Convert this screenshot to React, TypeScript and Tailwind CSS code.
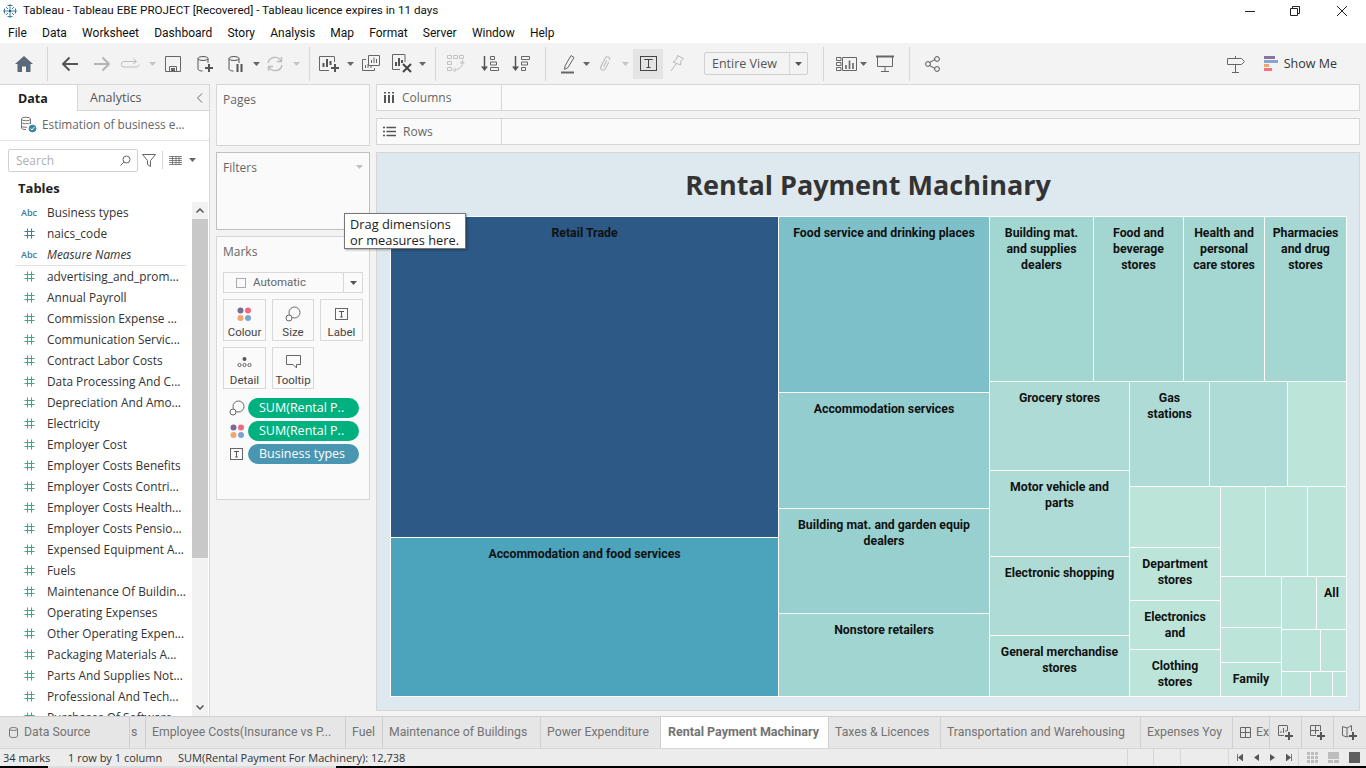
import React from 'react';

const ui = { fontFamily: '"Open Sans", "Noto Sans", sans-serif' };

const fields = [
  'advertising_and_prom...', 'Annual Payroll', 'Commission Expense ...', 'Communication Servic...',
  'Contract Labor Costs', 'Data Processing And C...', 'Depreciation And Amo...', 'Electricity', 'Employer Cost',
  'Employer Costs Benefits', 'Employer Costs Contri...', 'Employer Costs Health...', 'Employer Costs Pensio...',
  'Expensed Equipment A...', 'Fuels', 'Maintenance Of Buildin...', 'Operating Expenses', 'Other Operating Expen...',
  'Packaging Materials A...', 'Parts And Supplies Not...', 'Professional And Tech...', 'Purchases Of Software',
];

function Svg({ w = 20, h = 20, children, className = '' }: { w?: number; h?: number; children: React.ReactNode; className?: string }) {
  return (
    <svg width={w} height={h} viewBox={`0 0 ${w} ${h}`} fill="none" className={`block shrink-0 ${className}`}>
      {children}
    </svg>
  );
}

function Hash({ color }: { color: string }) {
  return (
    <Svg w={11} h={11}>
      <path d="M3.5 0.5V10.5M7.5 0.5V10.5M0.5 3.5H10.5M0.5 7.5H10.5" stroke={color} />
    </Svg>
  );
}

function Caret({ color = '#666' }: { color?: string }) {
  return (
    <Svg w={7} h={4}>
      <path d="M0 0H7L3.5 4Z" fill={color} />
    </Svg>
  );
}

function Box({ className, children }: { className: string; children?: React.ReactNode }) {
  return <div className={`h-[41px] shrink-0 flex items-center justify-center ${className}`}>{children}</div>;
}

function Sep() {
  return <div className="w-px h-[34px] bg-[#d6d6d6] shrink-0" />;
}

function Logo() {
  return (
    <Svg w={16} h={16}>
      <path d="M8 1V15M1 8H15M5.5 2.5H10.5M5.5 13.5H10.5M2.5 5.5V10.5M13.5 5.5V10.5M4 4L6 6M12 4L10 6M4 12L6 10M12 12L10 10" stroke="#3d7ea6" />
      <path d="M7 7H9V9H7Z" fill="#1f5f8b" />
    </Svg>
  );
}

function DataDrum({ color = '#555', x = 2 }: { color?: string; x?: number }) {
  return (
    <>
      <ellipse cx={x + 5} cy={3.5} rx={5} ry={2} stroke={color} />
      <path d={`M${x} 3.5V14c0 1.2 2 2 4.5 2M${x + 10} 3.5V8`} stroke={color} />
    </>
  );
}

function SizeIcon() {
  return (
    <Svg w={16} h={16}>
      <circle cx="9.5" cy="6.5" r="5.5" stroke="#666" />
      <circle cx="4" cy="12" r="3" fill="#fafafa" stroke="#666" />
    </Svg>
  );
}

function ColorIcon() {
  return (
    <Svg w={15} h={15}>
      <circle cx="3.5" cy="3.5" r="3" fill="#7b6a94" />
      <circle cx="11" cy="3.5" r="3" fill="#f06a7a" />
      <circle cx="3.5" cy="11" r="3" fill="#f2a56b" />
      <circle cx="11" cy="11" r="3" fill="#7ea3cf" />
    </Svg>
  );
}

function LabelIcon() {
  return (
    <Svg w={14} h={14}>
      <rect x="0.5" y="1.5" width="12" height="11" stroke="#666" />
      <path d="M4 4.5H9M6.5 4.5V10M5.2 10H7.8" stroke="#555" />
    </Svg>
  );
}

function MarkBtn({ label, className, children }: { label: string; className: string; children: React.ReactNode }) {
  return (
    <div className={`h-[42px] border border-[#d8d8d8] flex flex-col items-center shrink-0 ${className}`}>
      <div className="h-[25px] flex items-center justify-center pt-[3px]">{children}</div>
      <span className="font-[Roboto] text-[11.5px] leading-[15px] text-[#444]">{label}</span>
    </div>
  );
}

function Pill({ icon, text, color }: { icon: React.ReactNode; text: string; color: string }) {
  return (
    <div className="flex items-center h-[20px]">
      <div className="w-[25px] flex justify-center pl-[3px]">{icon}</div>
      <div className={`w-[111px] h-[20px] rounded-full pl-[11px] text-white text-[12.5px] leading-[20px] ${color}`}>{text}</div>
    </div>
  );
}

function Shelf({ icon, label }: { icon: React.ReactNode; label: string }) {
  return (
    <div className="h-[27px] border border-[#d6d6d6] bg-[#fafafa] flex">
      <div className="w-[125px] border-r border-[#d6d6d6] flex items-center pl-[6px] gap-[7px] text-[12px] text-[#666]">
        {icon}
        <span>{label}</span>
      </div>
    </div>
  );
}

function Cell({ className, label }: { className: string; label?: React.ReactNode }) {
  return (
    <div className={`shrink-0 overflow-hidden text-center font-[Roboto] font-bold text-[12.3px] leading-[16px] text-[#111] pt-[8px] ${className}`}>
      {label}
    </div>
  );
}

function Tab({ className, children }: { className: string; children: React.ReactNode }) {
  return (
    <div className={`h-full shrink-0 border-r border-[#cfcfcf] flex items-center font-[Roboto] text-[12.25px] text-[#737373] whitespace-nowrap overflow-hidden ${className}`}>
      {children}
    </div>
  );
}

function AddSheet({ children }: { children: React.ReactNode }) {
  return <div className="w-[32px] h-full shrink-0 border-l border-[#cfcfcf] flex items-center justify-center">{children}</div>;
}

function Plus({ x, y }: { x: number; y: number }) {
  return <path d={`M${x} ${y - 4}V${y + 4}M${x - 4} ${y}H${x + 4}`} stroke="#555" strokeWidth="2" />;
}

export default function App() {
  return (
    <div style={ui} className="relative w-[1366px] h-[768px] overflow-hidden bg-white flex flex-col text-[#333]">
      {/* window title */}
      <div className="h-[22px] flex items-center shrink-0">
        <div className="w-[23px] pl-[2px]"><Logo /></div>
        <span className="font-[Roboto] text-[11.66px] text-[#111]">Tableau - Tableau EBE PROJECT [Recovered] - Tableau licence expires in 11 days</span>
        <div className="ml-auto flex items-center">
          <div className="w-[10px] h-px bg-[#222] mr-[35px]" />
          <Svg w={10} h={10} className="mr-[36px]">
            <path d="M2.5 2.5V0.5H9.5V7.5H7.5M0.5 2.5H7.5V9.5H0.5Z" stroke="#222" />
          </Svg>
          <Svg w={12} h={12} className="mr-[18px]">
            <path d="M1 1L11 11M11 1L1 11" stroke="#222" />
          </Svg>
        </div>
      </div>

      {/* menu */}
      <div className="h-[21px] flex items-center shrink-0 pl-[8px] pt-px gap-[15.2px] font-[Roboto] text-[12px] text-[#111]">
        {['File', 'Data', 'Worksheet', 'Dashboard', 'Story', 'Analysis', 'Map', 'Format', 'Server', 'Window', 'Help'].map(m => (
          <span key={m}>{m}</span>
        ))}
      </div>

      {/* toolbar */}
      <div className="h-[41px] flex items-center shrink-0 bg-[#f3f3f3]">
        <Box className="w-[47px]">
          <Svg w={18} h={16}><path d="M9 0L18 8H15.5V16H11V10.5H7V16H2.5V8H0Z" fill="#5a6a7a" /></Svg>
        </Box>
        <Sep />
        <Box className="w-[44px]">
          <Svg w={18} h={16}><path d="M17 8H2M8.5 1.5L2 8L8.5 14.5" stroke="#555" strokeWidth="2" /></Svg>
        </Box>
        <Box className="w-[20px]">
          <Svg w={18} h={16}><path d="M1 8H16M9.5 1.5L16 8L9.5 14.5" stroke="#b5b5b5" strokeWidth="2" /></Svg>
        </Box>
        <Box className="w-[37px]">
          <Svg w={20} h={12}><path d="M15 3.5H3A2.5 2.5 0 0 0 3 9H15A2.5 2.5 0 0 0 18 6.5M12 0.5L15.5 3.5L12 6" stroke="#bdbdbd" /></Svg>
        </Box>
        <Box className="w-[6px]"><Caret color="#c4c4c4" /></Box>
        <Box className="w-[36px]">
          <Svg w={16} h={16}><path d="M0.5 0.5H15.5V15.5H0.5ZM4.5 15.5V10.5H11.5V15.5" stroke="#666" /><path d="M6 12H10V15H6Z" fill="#666" /></Svg>
        </Box>
        <Box className="w-[28px]">
          <Svg w={18} h={18}><DataDrum /><Plus x={13} y={13} /></Svg>
        </Box>
        <Box className="w-[34px]">
          <Svg w={18} h={18}><DataDrum /><path d="M10.5 9V17M14.5 9V17" stroke="#555" strokeWidth="2" /></Svg>
        </Box>
        <Box className="w-[6px]"><Caret /></Box>
        <Box className="w-[32px]">
          <Svg w={18} h={18}><path d="M2 8A7 7 0 0 1 15 6M16 10A7 7 0 0 1 3 12M15.5 2V6.5H11M2.5 16V11.5H7" stroke="#bcbcbc" strokeWidth="1.4" /></Svg>
        </Box>
        <Box className="w-[10px]"><Caret color="#c4c4c4" /></Box>
        <div className="w-[8px] shrink-0" />
        <Sep />
        <div className="w-[3px] shrink-0" />
        <Box className="w-[34px]">
          <Svg w={22} h={20}>
            <path d="M15 2.5H0.5V16.5H10" stroke="#666" />
            <path d="M4.5 9V13M8 5V13M11.5 7V11" stroke="#555" strokeWidth="2" />
            <path d="M15.5 2.5V8" stroke="#666" />
            <Plus x={16} y={14} />
          </Svg>
        </Box>
        <Box className="w-[6px]"><Caret /></Box>
        <Box className="w-[36px]">
          <Svg w={18} h={17}>
            <path d="M6.5 0.5H17.5V10.5H6.5ZM4 4.5H0.5V15.5H12.5V13" stroke="#666" />
            <path d="M9.5 8V5M12 8V2.5M14.5 8V4M3.5 13V10M6 13V9M9 13V11" stroke="#666" />
          </Svg>
        </Box>
        <Box className="w-[26px]">
          <Svg w={20} h={19}>
            <path d="M13 0.5H0.5V15.5H8M13 0.5V8" stroke="#666" />
            <path d="M4 8V12M7 4V12M10 6V9" stroke="#555" strokeWidth="2" />
            <path d="M11 10L19 18M19 10L11 18" stroke="#444" strokeWidth="2" />
          </Svg>
        </Box>
        <Box className="w-[14px]"><Caret /></Box>
        <div className="w-[6px] shrink-0" />
        <Sep />
        <Box className="w-[40px]">
          <Svg w={18} h={17}>
            <path d="M0.5 0.5H4.5V3.5H0.5ZM6.5 0.5H10.5V3.5H6.5ZM12.5 0.5H16.5V3.5H12.5ZM0.5 6.5H4.5V9.5H0.5ZM0.5 12.5H4.5V15.5H0.5Z" stroke="#c2c2c2" />
            <path d="M16 6C16 11 13 14 8 15M8 12.5V16.5L5.5 14.5M16 5L13.5 8H17.5" stroke="#c2c2c2" />
          </Svg>
        </Box>
        <Box className="w-[28px]">
          <Svg w={18} h={17}>
            <path d="M3.5 1V15" stroke="#555" strokeWidth="1.5" />
            <path d="M0 11.5H7L3.5 16Z" fill="#555" />
            <path d="M9.5 1.5H13.5V4.5H9.5ZM9.5 7H15.5V10H9.5ZM9.5 12.5H17.5V15.5H9.5Z" stroke="#666" />
          </Svg>
        </Box>
        <Box className="w-[34px]">
          <Svg w={18} h={17}>
            <path d="M3.5 1V15" stroke="#555" strokeWidth="1.5" />
            <path d="M0 11.5H7L3.5 16Z" fill="#555" />
            <path d="M9.5 1.5H17.5V4.5H9.5ZM9.5 7H15.5V10H9.5ZM9.5 12.5H13.5V15.5H9.5Z" stroke="#666" />
          </Svg>
        </Box>
        <div className="w-[7px] shrink-0" />
        <Sep />
        <div className="w-[7px] shrink-0" />
        <Box className="w-[30px]">
          <Svg w={14} h={20}>
            <path d="M4 12L10 1.5L13 3.5L7 13.5L3.5 15.5Z" stroke="#666" />
            <path d="M0 18.5H13" stroke="#666" strokeWidth="2" />
          </Svg>
        </Box>
        <Box className="w-[6px]"><Caret /></Box>
        <Box className="w-[32px]">
          <Svg w={14} h={18}>
            <g transform="rotate(28 7 9)">
              <path d="M9.5 5.5V13A2.5 2.5 0 0 1 4.5 13V3.5A2 2 0 0 1 9 3.5M7 5V12.5" stroke="#c0c0c0" strokeWidth="1.2" />
            </g>
          </Svg>
        </Box>
        <Box className="w-[8px]"><Caret color="#c4c4c4" /></Box>
        <div className="w-[4px] shrink-0" />
        <div className="w-[30px] h-[30px] shrink-0 bg-[#e4e4e4] flex items-center justify-center">
          <Svg w={17} h={15}>
            <rect x="0.5" y="0.5" width="16" height="14" stroke="#444" />
            <path d="M4.5 4V3.5H12.5V4M8.5 3.5V11.5M6.5 11.5H10.5" stroke="#444" />
          </Svg>
        </div>
        <Box className="w-[28px]">
          <Svg w={14} h={17}>
            <path d="M7.5 0.5L13.5 3.5L11 5.5L10.5 10L3 7L6.5 4.5ZM6 9L1 16" stroke="#b8b8b8" />
          </Svg>
        </Box>
        <div className="w-[13px] shrink-0" />
        <div className="w-[104px] h-[23px] shrink-0 border border-[#cfcfcf] rounded-[2px] flex items-center">
          <span className="w-[85px] pl-[7px] text-[12.5px] text-[#555] border-r border-[#d8d8d8] h-full leading-[21px]">Entire View</span>
          <div className="flex-1 flex justify-center"><Caret color="#555" /></div>
        </div>
        <div className="w-[15px] shrink-0" />
        <Sep />
        <div className="w-[8px] shrink-0" />
        <Box className="w-[28px]">
          <Svg w={21} h={14}>
            <path d="M0.5 0.5H5V3.5H0.5ZM0.5 5.5H5V8.5H0.5ZM0.5 10.5H5V13.5H0.5ZM6.5 0.5H20.5V13.5H6.5Z" stroke="#666" />
            <path d="M10 12V8M13.5 12V3.5M17 12V6" stroke="#666" strokeWidth="1.6" />
          </Svg>
        </Box>
        <Box className="w-[6px]"><Caret /></Box>
        <Box className="w-[38px]">
          <Svg w={18} h={17}>
            <path d="M0 1.5H18" stroke="#666" strokeWidth="2" />
            <path d="M1.5 2V11.5H16.5V2M9 11.5V16M5 16.5H13" stroke="#666" />
          </Svg>
        </Box>
        <div className="w-[5px] shrink-0" />
        <Sep />
        <Box className="w-[44px]">
          <Svg w={15} h={16}>
            <path d="M4.5 6.5L10 3.5M4.5 9.5L10 12.5" stroke="#555" />
            <circle cx="3" cy="8" r="2.4" stroke="#555" />
            <circle cx="12" cy="3" r="2.4" stroke="#555" />
            <circle cx="12" cy="13" r="2.4" stroke="#555" />
          </Svg>
        </Box>
        <div className="ml-auto flex items-center pr-[29px]">
          <Svg w={18} h={18} className="mr-[19px]">
            <path d="M0.5 3.5H14.5L17.5 6.5L14.5 9.5H0.5ZM8.5 1V3.5M8.5 9.5V17M5 17.5H12" stroke="#666" />
          </Svg>
          <Svg w={14} h={15} className="mr-[6px]">
            <path d="M0 0H11V3H0Z" fill="#8a769c" />
            <path d="M0 4H14V7H0Z" fill="#86a6d0" />
            <path d="M0 8H5V11H0Z" fill="#f2a56b" />
            <path d="M0 12H8V15H0Z" fill="#f3727f" />
          </Svg>
          <span className="text-[12.5px] text-[#333] pt-[2px]">Show Me</span>
        </div>
      </div>

      {/* main */}
      <div className="h-[632px] flex shrink-0 bg-[#f3f3f3]">
        {/* data pane */}
        <div className="w-[210px] shrink-0 bg-white border-r border-[#d6d6d6] flex flex-col overflow-hidden">
          <div className="h-[27px] flex shrink-0 text-[12.5px]">
            <div className="w-[77px] pl-[18px] font-bold leading-[27px] text-[#222] border-t border-[#d6d6d6]">Data</div>
            <div className="flex-1 flex items-center bg-[#f3f3f3] border-l border-b border-t border-[#d6d6d6] pl-[12px] pt-[1px] text-[#555]">
              Analytics
              <Svg w={7} h={10} className="ml-auto mr-[6px]"><path d="M6 0.5L1.5 5L6 9.5" stroke="#666" /></Svg>
            </div>
          </div>
          <div className="h-[30px] shrink-0 border-b border-[#e2e2e2] flex items-center pl-[20px] gap-[5px] pb-[2px] text-[11.8px] text-[#666]">
            <Svg w={17} h={17}>
              <ellipse cx="6" cy="3" rx="4.5" ry="1.8" stroke="#777" />
              <path d="M1.5 3V12C1.5 13 3 13.5 6 13.5M10.5 3V8M1.5 6.5C1.5 8 9 8 10.5 6.5M1.5 10C1.5 11 4 11.5 7 11.2" stroke="#777" />
              <circle cx="12.5" cy="12.5" r="3.8" fill="#3d85a8" />
              <path d="M10.5 12.5L12 14L14.5 11" stroke="#fff" />
            </Svg>
            <span>Estimation of business e...</span>
          </div>
          <div className="h-[38px] shrink-0 flex items-start pt-[8px] pl-[8px]">
            <div className="w-[130px] h-[23px] border border-[#d0d0d0] rounded-[2px] flex items-center pl-[7px] pr-[6px] text-[12px] text-[#b0b0b0]">
              Search
              <Svg w={11} h={11} className="ml-auto">
                <circle cx="6.5" cy="4.5" r="3.5" stroke="#666" />
                <path d="M4 7L0.5 10.5" stroke="#666" />
              </Svg>
            </div>
            <Svg w={14} h={13} className="ml-[4px] mt-[5px]">
              <path d="M0.5 0.5H13.5L8.5 6.5V12.5L5.5 10.5V6.5Z" stroke="#666" />
            </Svg>
            <div className="w-px h-[18px] bg-[#d8d8d8] ml-[6px] mt-[2px]" />
            <Svg w={13} h={9} className="ml-[6px] mt-[7px]">
              <path d="M0 0.5H13M0 2.5H13M0 4.5H13M0 6.5H13M0 8.5H13M3.5 0V9M7 0V9M10 0V9" stroke="#666" strokeWidth="0.8" />
            </Svg>
            <div className="ml-[7px] mt-[9px]"><Caret /></div>
          </div>
          <div className="h-[23px] shrink-0 pl-[18px] font-bold text-[13px] leading-[18px] text-[#222]">Tables</div>
          <div className="flex flex-1 min-h-0">
            <div className="flex-1 min-w-0 overflow-hidden">
              {['Business types', 'naics_code', 'Measure Names'].map((f, i) => (
                <div key={f} className="h-[21px] flex items-center text-[11.85px] text-[#333] whitespace-nowrap">
                  <div className="w-[47px] pl-[21px] flex items-center">
                    {i === 1 ? (
                      <div className="pl-[3px]"><Hash color="#3f7f9c" /></div>
                    ) : (
                      <span className="text-[9px] font-semibold text-[#3a7a9a]">Abc</span>
                    )}
                  </div>
                  <span className={i === 2 ? 'italic' : ''}>{f}</span>
                </div>
              ))}
              <div className="h-px bg-[#e2e2e2] ml-[15px] w-[171px]" />
              {fields.map(f => (
                <div key={f} className="h-[21px] flex items-center text-[11.85px] text-[#333] whitespace-nowrap">
                  <div className="w-[47px] pl-[24px]"><Hash color="#41a884" /></div>
                  <span>{f}</span>
                </div>
              ))}
            </div>
            <div className="w-[16px] shrink-0 bg-[#f2f2f2] flex flex-col mr-px">
              <div className="h-[17px] flex items-center justify-center">
                <Svg w={8} h={5}><path d="M0.5 4.5L4 1L7.5 4.5" stroke="#555" strokeWidth="1.5" /></Svg>
              </div>
              <div className="h-[339px] bg-[#c8c8c8]" />
              <div className="mt-auto h-[18px] flex items-center justify-center">
                <Svg w={8} h={5}><path d="M0.5 0.5L4 4L7.5 0.5" stroke="#555" strokeWidth="1.5" /></Svg>
              </div>
            </div>
          </div>
        </div>

        {/* cards */}
        <div className="w-[154px] ml-[6px] shrink-0 flex flex-col gap-[6px]">
          <div className="h-[62px] border border-[#d6d6d6] bg-[#fafafa] pl-[6px] pt-[6px] text-[12px] text-[#666]">Pages</div>
          <div className="h-[78px] border border-[#c0c0c0] bg-[#fafafa] pl-[6px] pr-[6px] pt-[6px] flex justify-between text-[12px] text-[#666]">
            Filters
            <div className="mt-[6px]"><Caret color="#c0c0c0" /></div>
          </div>
          <div className="h-[264px] border border-[#d6d6d6] bg-[#fafafa] pl-[6px] pt-[6px] text-[12px] text-[#666]">
            <div className="h-[29px]">Marks</div>
            <div className="w-[140px] h-[21px] border border-[#d8d8d8] flex items-center">
              <div className="w-[120px] border-r border-[#d8d8d8] h-full flex items-center pl-[12px] gap-[7px] font-[Roboto] text-[11.5px]">
                <div className="w-[10px] h-[10px] border border-[#aaa]" />
                <span className="pt-px">Automatic</span>
              </div>
              <div className="flex-1 flex justify-center"><Caret color="#555" /></div>
            </div>
            <div className="flex gap-[6px] mt-[6px]">
              <MarkBtn label="Colour" className="w-[43px]"><ColorIcon /></MarkBtn>
              <MarkBtn label="Size" className="w-[42px]"><SizeIcon /></MarkBtn>
              <MarkBtn label="Label" className="w-[43px]"><LabelIcon /></MarkBtn>
            </div>
            <div className="flex gap-[6px] mt-[6px]">
              <MarkBtn label="Detail" className="w-[43px]">
                <Svg w={15} h={12}>
                  <circle cx="7.5" cy="3" r="2" fill="#555" />
                  <circle cx="2.5" cy="9" r="1.6" stroke="#666" />
                  <circle cx="7.5" cy="9" r="1.6" stroke="#666" />
                  <circle cx="12.5" cy="9" r="1.6" stroke="#666" />
                </Svg>
              </MarkBtn>
              <MarkBtn label="Tooltip" className="w-[42px]">
                <Svg w={15} h={14}>
                  <path d="M0.5 0.5H14.5V9.5H10.5V13L7 9.5H0.5Z" stroke="#666" />
                </Svg>
              </MarkBtn>
            </div>
            <div className="flex flex-col gap-[3px] mt-[9px]">
              <Pill icon={<SizeIcon />} text="SUM(Rental P.." color="bg-[#00b180]" />
              <Pill icon={<ColorIcon />} text="SUM(Rental P.." color="bg-[#00b180]" />
              <Pill icon={<LabelIcon />} text="Business types" color="bg-[#4996b2]" />
            </div>
          </div>
        </div>

        {/* worksheet */}
        <div className="w-[984px] ml-[6px] shrink-0 flex flex-col gap-[7px]">
          <Shelf
            label="Columns"
            icon={<Svg w={12} h={11}><path d="M2 0V1.5M2 3V11M6 0V1.5M6 3V11M10 0V1.5M10 3V11" stroke="#555" strokeWidth="2" /></Svg>}
          />
          <Shelf
            label="Rows"
            icon={<Svg w={13} h={11}><path d="M0 1.5H2M3.5 1.5H13M0 5.5H2M3.5 5.5H13M0 9.5H2M3.5 9.5H13" stroke="#555" strokeWidth="1.6" /></Svg>}
          />
          <div className="h-[559px] border border-[#d6d6d6] bg-[#dde9ef] flex flex-col items-start">
            <div className="w-full h-[63px] text-center font-bold text-[27px] leading-[64px] text-[#333] shrink-0">
              Rental Payment Machinary
            </div>
            <div className="ml-[13px] w-[957px] h-[481px] p-px bg-white flex gap-px">
              <div className="w-[387px] flex flex-col gap-px">
                <Cell className="h-[320px] bg-[#2c5985]" label="Retail Trade" />
                <Cell className="h-[158px] bg-[#4ba4bc]" label="Accommodation and food services" />
              </div>
              <div className="w-[210px] flex flex-col gap-px">
                <Cell className="h-[175px] bg-[#7dc0c9]" label="Food service and drinking places" />
                <Cell className="h-[115px] bg-[#93cdcf]" label="Accommodation services" />
                <Cell className="h-[104px] bg-[#98d0cf]" label={<>Building mat. and garden equip<br />dealers</>} />
                <Cell className="h-[82px] bg-[#a0d5d1]" label="Nonstore retailers" />
              </div>
              <div className="w-[356px] flex flex-col gap-px">
                <div className="h-[164px] flex gap-px">
                  <Cell className="w-[103px] bg-[#a2d6d1]" label={<>Building mat.<br />and supplies<br />dealers</>} />
                  <Cell className="w-[89px] bg-[#a3d6d1]" label={<>Food and<br />beverage<br />stores</>} />
                  <Cell className="w-[80px] bg-[#a4d7d2]" label={<>Health and<br />personal<br />care stores</>} />
                  <Cell className="w-[81px] bg-[#a4d7d2]" label={<>Pharmacies<br />and drug<br />stores</>} />
                </div>
                <div className="h-[314px] flex gap-px">
                  <div className="w-[139px] flex flex-col gap-px">
                    <Cell className="h-[88px] bg-[#aedbd5]" label="Grocery stores" />
                    <Cell className="h-[85px] bg-[#aedbd5]" label={<>Motor vehicle and<br />parts</>} />
                    <Cell className="h-[78px] bg-[#aedcd5]" label="Electronic shopping" />
                    <Cell className="h-[60px] bg-[#b0ddd6]" label={<>General merchandise<br />stores</>} />
                  </div>
                  <div className="w-[216px] flex flex-col gap-px">
                    <div className="h-[104px] flex gap-px">
                      <Cell className="w-[79px] bg-[#aedbd5]" label={<>Gas<br />stations</>} />
                      <Cell className="w-[77px] bg-[#aedbd5]" />
                      <Cell className="w-[58px] bg-[#bce4d9]" />
                    </div>
                    <div className="h-[209px] flex gap-px">
                      <div className="w-[90px] flex flex-col gap-px">
                        <Cell className="h-[60px] bg-[#bce4d9]" />
                        <Cell className="h-[52px] bg-[#bce4d9]" label={<>Department<br />stores</>} />
                        <Cell className="h-[48px] bg-[#bce4d9]" label={<>Electronics<br />and</>} />
                        <Cell className="h-[46px] bg-[#bce4d9]" label={<>Clothing<br />stores</>} />
                      </div>
                      <div className="w-[125px] flex flex-col gap-px">
                        <div className="h-[89px] flex gap-px">
                          <Cell className="w-[44px] bg-[#bce4d9]" />
                          <Cell className="w-[41px] bg-[#bce4d9]" />
                          <Cell className="w-[38px] bg-[#bce4d9]" />
                        </div>
                        <div className="h-[119px] flex gap-px">
                          <div className="w-[60px] flex flex-col gap-px">
                            <Cell className="h-[50px] bg-[#bce4d9]" />
                            <Cell className="h-[34px] bg-[#bce4d9]" />
                            <Cell className="h-[33px] bg-[#bce4d9]" label="Family" />
                          </div>
                          <div className="w-[64px] flex flex-col gap-px">
                            <div className="h-[52px] flex gap-px">
                              <Cell className="w-[34px] bg-[#bce4d9]" />
                              <Cell className="w-[29px] bg-[#bce4d9]" label="All" />
                            </div>
                            <div className="h-[41px] flex gap-px">
                              <Cell className="w-[38px] bg-[#bce4d9]" />
                              <Cell className="w-[25px] bg-[#bce4d9]" />
                            </div>
                            <div className="h-[24px] flex gap-px">
                              <Cell className="w-[28px] bg-[#bce4d9]" />
                              <Cell className="w-[21px] bg-[#bce4d9]" />
                              <Cell className="w-[13px] bg-[#bce4d9]" />
                            </div>
                          </div>
                        </div>
                      </div>
                    </div>
                  </div>
                </div>
              </div>
            </div>
          </div>
        </div>
      </div>

      {/* sheet tabs */}
      <div className="h-[32px] flex shrink-0 bg-[#e6e6e6] border-t border-[#d0d0d0]">
        <Tab className="w-[130px] gap-[6px] pl-[9px]">
          <Svg w={9} h={11}>
            <ellipse cx="4.5" cy="2" rx="4" ry="1.5" stroke="#777" />
            <path d="M0.5 2V9C0.5 10 2 10.5 4.5 10.5C7 10.5 8.5 10 8.5 9V2" stroke="#777" />
          </Svg>
          Data Source
        </Tab>
        <Tab className="w-[16px] pl-[1px]">s</Tab>
        <Tab className="w-[200px] pl-[6px]">Employee Costs(Insurance vs P...</Tab>
        <Tab className="w-[37px] pl-[6px]">Fuel</Tab>
        <Tab className="w-[158px] pl-[6px]">Maintenance of Buildings</Tab>
        <Tab className="w-[120px] pl-[6px]">Power Expenditure</Tab>
        <Tab className="w-[168px] pl-[7px] bg-white text-[#555]"><span className="text-[12.5px] font-bold">Rental Payment Machinary</span></Tab>
        <Tab className="w-[112px] pl-[6px]">Taxes &amp; Licences</Tab>
        <Tab className="w-[200px] pl-[6px]">Transportation and Warehousing</Tab>
        <Tab className="w-[92px] pl-[6px]">Expenses Yoy</Tab>
        <Tab className="w-[36px] gap-[5px] border-r-0 pl-[7px]">
          <Svg w={11} h={11} className="shrink-0"><path d="M0.5 0.5H10.5V10.5H0.5ZM5.5 0.5V10.5M0.5 5.5H10.5" stroke="#666" /></Svg>
          Ex
        </Tab>
        <AddSheet>
          <Svg w={16} h={16}>
            <path d="M9 0.5H0.5V10.5H6M9.5 0.5V6" stroke="#666" />
            <path d="M3 8V6M5.5 8V3M8 7V5" stroke="#666" />
            <Plus x={11} y={11} />
          </Svg>
        </AddSheet>
        <AddSheet>
          <Svg w={16} h={16}>
            <path d="M0.5 0.5H10.5V6M6 10.5H0.5V0.5M5.5 0.5V9M0.5 5.5H9" stroke="#666" />
            <Plus x={11} y={11} />
          </Svg>
        </AddSheet>
        <AddSheet>
          <Svg w={16} h={16}>
            <path d="M0.5 1.5L5 3L9.5 0.5V6M5 3V12M5 12L0.5 10.5V1.5M5 12L6.5 11.5" stroke="#666" />
            <Plus x={11} y={11} />
          </Svg>
        </AddSheet>
      </div>

      {/* status bar */}
      <div className="h-[18px] flex shrink-0 items-center bg-[#ececec] border-t border-[#d6d6d6] text-[11px] leading-[18px] text-[#333] whitespace-nowrap">
        <span className="w-[68px] pl-[3px]">34 marks</span>
        <span className="w-[110px]">1 row by 1 column</span>
        <span className="w-[949px]">SUM(Rental Payment For Machinery): 12,738</span>
        <div className="w-[26px] h-full border-l border-[#d6d6d6]" />
        <div className="w-[27px] h-full border-l border-[#d6d6d6]" />
        <div className="w-[48px] h-full border-l border-[#d6d6d6]" />
        <div className="w-[70px] h-full border-l border-[#d6d6d6] flex items-center gap-[11px] pl-[8px]">
          <Svg w={6} h={7}><path d="M0.5 0V7M6 0V7L1.5 3.5Z" stroke="#555" fill="#555" strokeWidth="0.8" /></Svg>
          <Svg w={5} h={7}><path d="M5 0V7L0 3.5Z" fill="#555" /></Svg>
          <Svg w={5} h={7}><path d="M0 0V7L5 3.5Z" fill="#555" /></Svg>
          <Svg w={6} h={7}><path d="M5.5 0V7M0 0V7L4.5 3.5Z" stroke="#555" fill="#555" strokeWidth="0.8" /></Svg>
        </div>
        <div className="flex-1 h-full border-l border-[#d6d6d6] flex items-center gap-[10px] pl-[8px]">
          <Svg w={11} h={11}><path d="M0 0H3V3H0ZM4 0H7V3H4ZM8 0H11V3H8ZM0 4H3V7H0ZM4 4H7V7H4ZM8 4H11V7H8ZM0 8H3V11H0ZM4 8H7V11H4ZM8 8H11V11H8Z" fill="#bdbdbd" /></Svg>
          <Svg w={11} h={11}><path d="M0 0H11V7H0ZM0 8H5V11H0ZM6 8H11V11H6Z" fill="#bdbdbd" /></Svg>
          <Svg w={11} h={11}><path d="M0 0H11V11H0Z" fill="#5f5f5f" /></Svg>
        </div>
      </div>
      <div className="h-[2px] shrink-0 flex">
        <div className="w-[48px] bg-black" />
        <div className="w-[288px] bg-[#dddddd]" />
        <div className="flex-1 bg-black" />
      </div>

      {/* shelf hint */}
      <div className="absolute left-[344px] top-[213px] w-[122px] h-[36px] bg-white border border-[#777] shadow-[1px_1px_2px_rgba(0,0,0,0.35)] pl-[5px] pt-[2px] text-[12.8px] leading-[16px] text-[#222]">
        Drag dimensions<br />or measures here.
      </div>
    </div>
  );
}
